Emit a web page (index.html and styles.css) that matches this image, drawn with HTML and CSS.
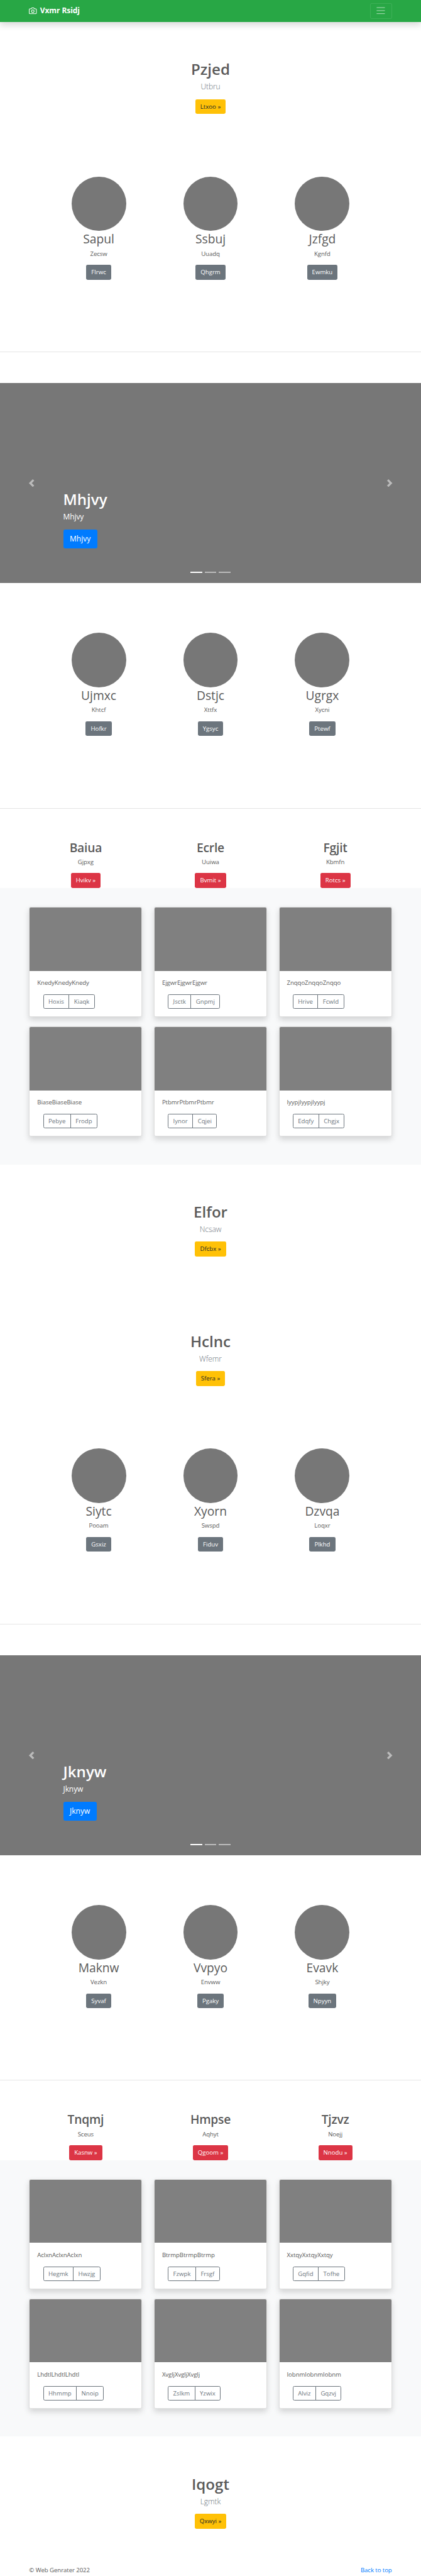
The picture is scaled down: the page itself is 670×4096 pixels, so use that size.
FILE: index.html
```html
<!DOCTYPE html>
<html lang="en">
<head>
<meta charset="utf-8">
<title>Vxmr Rsidj</title>
<link rel="stylesheet" href="styles.css">
</head>
<body>
<header class="navbar">
  <div class="container navbar-inner">
    <a class="brand">
      <svg class="brand-icon" viewBox="0 0 24 24"><path d="M23 19a2 2 0 0 1-2 2H3a2 2 0 0 1-2-2V8a2 2 0 0 1 2-2h4l2-3h6l2 3h4a2 2 0 0 1 2 2z"/><circle cx="12" cy="13" r="4"/></svg>
      <strong>Vxmr Rsidj</strong>
    </a>
    <button class="toggler" aria-label="Toggle navigation"><svg viewBox="0 0 30 30"><path d="M4 7h22M4 15h22M4 23h22"/></svg></button>
  </div>
</header>
<main>
<section class="hero"><h1>Pzjed</h1><p class="lead">Utbru</p><a class="btn btn-warning">Ltxoo »</a></section>
<section class="marketing">
  <div class="person"><div class="avatar"></div><h2>Sapul</h2><p>Zecsw</p><a class="btn btn-secondary">Flrwc</a></div>
  <div class="person"><div class="avatar"></div><h2>Ssbuj</h2><p>Uuadq</p><a class="btn btn-secondary">Qhgrm</a></div>
  <div class="person"><div class="avatar"></div><h2>Jzfgd</h2><p>Kgnfd</p><a class="btn btn-secondary">Ewmku</a></div>
</section>
<hr>
<section class="carousel">
  <div class="control"><svg viewBox="0 0 8 8"><path d="M5.25 0l-4 4 4 4 1.5-1.5L4.25 4l2.5-2.5L5.25 0z"/></svg></div>
  <div class="caption"><h1>Mhjvy</h1><p>Mhjvy</p><a class="btn btn-primary">Mhjvy</a></div>
  <div class="control"><svg viewBox="0 0 8 8"><path d="M2.75 0l-1.5 1.5L3.75 4l-2.5 2.5L2.75 8l4-4-4-4z"/></svg></div>
  <div class="indicators"><i class="active"></i><i></i><i></i></div>
</section>
<section class="marketing after-carousel">
  <div class="person"><div class="avatar"></div><h2>Ujmxc</h2><p>Khtcf</p><a class="btn btn-secondary">Hofkr</a></div>
  <div class="person"><div class="avatar"></div><h2>Dstjc</h2><p>Xttfx</p><a class="btn btn-secondary">Ygsyc</a></div>
  <div class="person"><div class="avatar"></div><h2>Ugrgx</h2><p>Xycni</p><a class="btn btn-secondary">Ptewf</a></div>
</section>
<hr>
<section class="features">
  <div><h2>Baiua</h2><p>Gjpxg</p><a class="btn btn-danger">Hvikv »</a></div>
  <div><h2>Ecrle</h2><p>Uuiwa</p><a class="btn btn-danger">Bvmit »</a></div>
  <div><h2>Fgjit</h2><p>Kbmfn</p><a class="btn btn-danger">Rotcs »</a></div>
</section>
<section class="album"><div class="container cards">
  <article class="card"><div class="thumb"></div><div class="card-body"><p>KnedyKnedyKnedy</p><div class="btn-group"><a>Hoxis</a><a>Kiaqk</a></div></div></article>
  <article class="card"><div class="thumb"></div><div class="card-body"><p>EjgwrEjgwrEjgwr</p><div class="btn-group"><a>Jsctk</a><a>Gnpmj</a></div></div></article>
  <article class="card"><div class="thumb"></div><div class="card-body"><p>ZnqqoZnqqoZnqqo</p><div class="btn-group"><a>Hrive</a><a>Fcwld</a></div></div></article>
  <article class="card"><div class="thumb"></div><div class="card-body"><p>BiaseBiaseBiase</p><div class="btn-group"><a>Pebye</a><a>Frodp</a></div></div></article>
  <article class="card"><div class="thumb"></div><div class="card-body"><p>PtbmrPtbmrPtbmr</p><div class="btn-group"><a>Iynor</a><a>Cqjei</a></div></div></article>
  <article class="card"><div class="thumb"></div><div class="card-body"><p>IyypjIyypjIyypj</p><div class="btn-group"><a>Edqfy</a><a>Chgjx</a></div></div></article>
</div></section>
<section class="hero"><h1>Elfor</h1><p class="lead">Ncsaw</p><a class="btn btn-warning">Dfcbx »</a></section>
<section class="hero"><h1>Hclnc</h1><p class="lead">Wfemr</p><a class="btn btn-warning">Sfera »</a></section>
<section class="marketing">
  <div class="person"><div class="avatar"></div><h2>Siytc</h2><p>Pooam</p><a class="btn btn-secondary">Gsxiz</a></div>
  <div class="person"><div class="avatar"></div><h2>Xyorn</h2><p>Swspd</p><a class="btn btn-secondary">Fiduv</a></div>
  <div class="person"><div class="avatar"></div><h2>Dzvqa</h2><p>Loqxr</p><a class="btn btn-secondary">Plkhd</a></div>
</section>
<hr>
<section class="carousel">
  <div class="control"><svg viewBox="0 0 8 8"><path d="M5.25 0l-4 4 4 4 1.5-1.5L4.25 4l2.5-2.5L5.25 0z"/></svg></div>
  <div class="caption"><h1>Jknyw</h1><p>Jknyw</p><a class="btn btn-primary">Jknyw</a></div>
  <div class="control"><svg viewBox="0 0 8 8"><path d="M2.75 0l-1.5 1.5L3.75 4l-2.5 2.5L2.75 8l4-4-4-4z"/></svg></div>
  <div class="indicators"><i class="active"></i><i></i><i></i></div>
</section>
<section class="marketing after-carousel">
  <div class="person"><div class="avatar"></div><h2>Maknw</h2><p>Vezkn</p><a class="btn btn-secondary">Syvaf</a></div>
  <div class="person"><div class="avatar"></div><h2>Vvpyo</h2><p>Envww</p><a class="btn btn-secondary">Pgaky</a></div>
  <div class="person"><div class="avatar"></div><h2>Evavk</h2><p>Shjky</p><a class="btn btn-secondary">Npyyn</a></div>
</section>
<hr>
<section class="features">
  <div><h2>Tnqmj</h2><p>Sceus</p><a class="btn btn-danger">Kasnw »</a></div>
  <div><h2>Hmpse</h2><p>Aqhyt</p><a class="btn btn-danger">Qgoom »</a></div>
  <div><h2>Tjzvz</h2><p>Noejj</p><a class="btn btn-danger">Nnodu »</a></div>
</section>
<section class="album"><div class="container cards">
  <article class="card"><div class="thumb"></div><div class="card-body"><p>AclxnAclxnAclxn</p><div class="btn-group"><a>Hegmk</a><a>Hwzjg</a></div></div></article>
  <article class="card"><div class="thumb"></div><div class="card-body"><p>BtrmpBtrmpBtrmp</p><div class="btn-group"><a>Fzwpk</a><a>Frsgf</a></div></div></article>
  <article class="card"><div class="thumb"></div><div class="card-body"><p>XxtqyXxtqyXxtqy</p><div class="btn-group"><a>Gqfid</a><a>Tofhe</a></div></div></article>
  <article class="card"><div class="thumb"></div><div class="card-body"><p>LhdtlLhdtlLhdtl</p><div class="btn-group"><a>Hhmmp</a><a>Nnoip</a></div></div></article>
  <article class="card"><div class="thumb"></div><div class="card-body"><p>XvgljXvgljXvglj</p><div class="btn-group"><a>Zslkm</a><a>Yzwix</a></div></div></article>
  <article class="card"><div class="thumb"></div><div class="card-body"><p>IobnmIobnmIobnm</p><div class="btn-group"><a>Alviz</a><a>Gqzvj</a></div></div></article>
</div></section>
<section class="hero"><h1>Iqogt</h1><p class="lead">Lgmtk</p><a class="btn btn-warning">Qxwyi »</a></section>
</main>
<footer class="container footer"><p>© Web Genrater 2022</p><a>Back to top</a></footer>
</body>
</html>
```
FILE: styles.css
```css
/* 1rem stands for 16 design pixels */
html { font-size: 9.932px; }
*, *::before, *::after { box-sizing: border-box; }
body {
  margin: 0;
  background: #fff;
  color: #5a5a5a;
  font-family: "Open Sans", "Noto Sans", sans-serif;
  font-size: .97rem;
  line-height: 1.5rem;
  letter-spacing: -.008em;
}
h1, h2, p { margin: 0; }
h1 { height: 3.1rem; padding-top: .1rem; font-size: 2.43rem; line-height: 3rem; font-weight: 600; letter-spacing: 0; margin-bottom: .4rem; }
h2 { height: 2.475rem; padding-top: .075rem; font-size: 1.94rem; line-height: 2.4rem; font-weight: 600; letter-spacing: -.012em; margin-bottom: .425rem; }
p { height: 1.54rem; padding-top: .04rem; margin-bottom: .96rem; }
hr { margin: 5rem 0; border: 0; height: .0625rem; background: rgba(0, 0, 0, .1); }
.container { width: 60rem; margin: 0 auto; padding: 0 .9375rem; }

.navbar {
  position: relative;
  height: 3.5rem;
  background: #28a745;
  box-shadow: 0 .5rem 1rem rgba(0, 0, 0, .15);
}
.navbar-inner { display: flex; align-items: center; justify-content: space-between; height: 100%; }
.brand { display: flex; align-items: center; gap: .5rem; color: #fff; font-size: 1.21rem; }
.brand-icon { width: 1.25rem; height: 1.25rem; fill: none; stroke: #fff; stroke-width: 2; stroke-linecap: round; stroke-linejoin: round; }
.toggler {
  display: flex;
  width: 3.5rem;
  height: 2.5rem;
  padding: .25rem .75rem;
  background: none;
  border: 1px solid rgba(255, 255, 255, .1);
  border-radius: .25rem;
}
.toggler svg { width: 100%; height: 100%; fill: none; stroke: rgba(255, 255, 255, .5); stroke-width: 2; }

.btn {
  display: inline-block;
  height: 2.375rem;
  padding: 0 .8125rem;
  border-radius: .25rem;
  line-height: 2.45rem;
  letter-spacing: 0;
  vertical-align: top;
}
.btn-warning { background: #ffc107; color: #212529; }
.btn-secondary { background: #6c757d; color: #fff; }
.btn-danger { background: #dc3545; color: #fff; }
.btn-primary { height: 3rem; padding: 0 1.0625rem; line-height: 3.08rem; border-radius: .3rem; background: #007bff; color: #fff; font-size: 1.21rem; }

.hero { display: flex; flex-direction: column; align-items: center; padding: 6rem 0; }
.lead { height: 1.915rem; font-size: 1.21rem; line-height: 1.875rem; font-weight: 300; color: #6c757d; }

.marketing { display: grid; grid-template-columns: repeat(3, 17.9167rem); justify-content: center; padding: 4rem 0 6.5rem; }
.after-carousel { padding-top: 8rem; }
.person { display: flex; flex-direction: column; align-items: center; }
.person h2 { font-weight: 400; letter-spacing: 0; }
.avatar { width: 8.75rem; height: 8.75rem; border-radius: 50%; background: #777; }

.carousel { position: relative; display: grid; grid-template-columns: 15% 70% 15%; height: 32rem; background: #777; }
.control { display: flex; align-items: center; justify-content: center; }
.control svg { width: 1.25rem; height: 1.25rem; fill: #fff; opacity: .5; }
.caption { align-self: end; padding-bottom: 5.5rem; color: #fff; }
.caption p { height: 1.79rem; font-size: 1.21rem; line-height: 1.75rem; margin-bottom: 1.21rem; }
.caption .btn { display: block; width: max-content; }
.indicators { position: absolute; left: 0; right: 0; bottom: 1.625rem; display: flex; justify-content: center; gap: .375rem; }
.indicators i { width: 1.875rem; height: .1875rem; background: #fff; opacity: .5; }
.indicators .active { opacity: 1; }

.features { display: grid; grid-template-columns: repeat(3, 20rem); justify-content: center; }
.features div { display: flex; flex-direction: column; align-items: center; }

.album { padding: 3rem 0 4.5rem; background: #f8f9fa; }
.cards { display: grid; grid-template-columns: repeat(3, 18.125rem); column-gap: 1.875rem; row-gap: 1.5rem; }
.card {
  height: 17.625rem;
  background: #fff;
  border: 1px solid rgba(0, 0, 0, .125);
  border-radius: .25rem;
  box-shadow: 0 .5rem 1rem rgba(0, 0, 0, .15);
}
.thumb { height: 10.15rem; background: #808080; border-radius: .19rem .19rem 0 0; }
.card-body { padding: 1.25rem 1.2rem; }
.btn-group { display: flex; margin-left: .9375rem; }
.btn-group a {
  height: 2.375rem;
  padding: 0 .75rem;
  border: 1px solid #6c757d;
  color: #6c757d;
  line-height: 2.25rem;
  letter-spacing: 0;
}
.btn-group a:first-child { border-radius: .25rem 0 0 .25rem; }
.btn-group a:last-child { border-radius: 0 .25rem .25rem 0; margin-left: -1px; }

.footer { display: flex; justify-content: space-between; height: 1.5rem; }
.footer p { height: auto; padding: 0; margin: 0; }
.footer a { color: #007bff; }
```
